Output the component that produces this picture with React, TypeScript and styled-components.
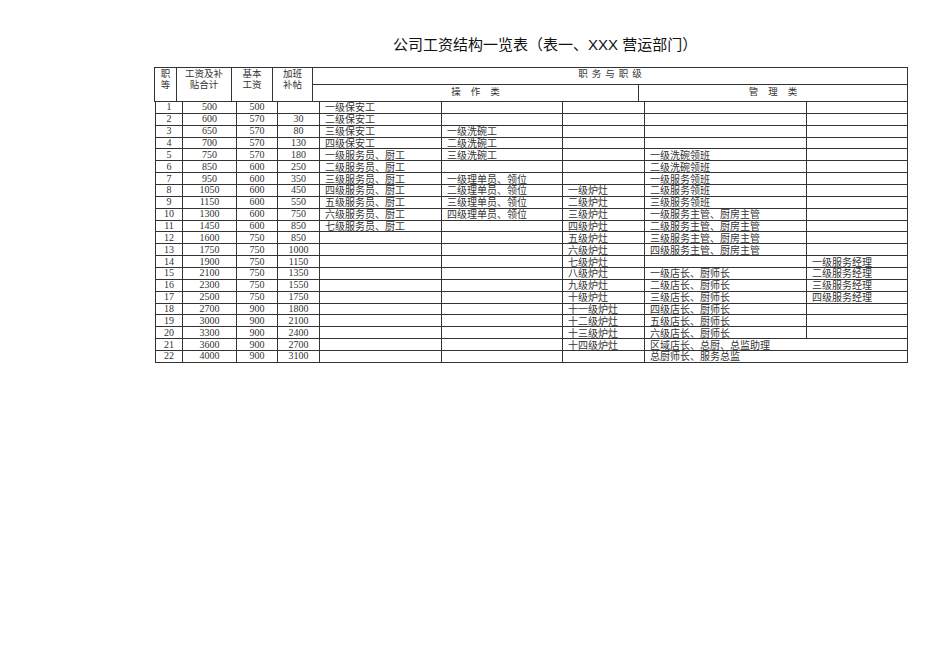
import React from "react";
import styled, { createGlobalStyle } from "styled-components";

const GlobalStyle = createGlobalStyle`
  html, body {
    margin: 0;
    padding: 0;
    background: #ffffff;
  }
  body {
    font-family: "Liberation Serif", "Noto Sans CJK SC", serif;
    color: #222;
  }
`;

const Page = styled.div`
  width: 950px;
  height: 672px;
  padding-top: 35px;
  box-sizing: border-box;
`;

const Title = styled.h1`
  margin: 0 0 12px 393px;
  font-family: "Liberation Sans", "Noto Sans CJK SC", sans-serif;
  font-weight: 400;
  font-size: 15px;
  line-height: 20px;
  color: #111;
  white-space: nowrap;
`;

const HeaderGrid = styled.div`
  margin-left: 154px;
  width: 754px;
  display: grid;
  grid-template-columns: 22px 55px 41px 40px 326px 269px;
  grid-template-rows: 17px 17px;
  border-left: 1px solid #333;
  border-top: 1px solid #333;
  box-sizing: border-box;
`;

const HeadCell = styled.div<{ $rows?: number; $span?: number; $spacing?: number; $pad?: number }>`
  grid-row: span ${(p) => p.$rows || 1};
  grid-column: span ${(p) => p.$span || 1};
  border-right: 1px solid #333;
  border-bottom: 1px solid #333;
  box-sizing: border-box;
  text-align: center;
  font-family: "Noto Sans CJK SC", sans-serif;
  font-size: 9.5px;
  line-height: 10.5px;
  padding-top: ${(p) => p.$pad || 0}px;
  padding-left: ${(p) => p.$spacing || 0}px;
  letter-spacing: ${(p) => p.$spacing || 0}px;
  color: #333;
  white-space: nowrap;
`;

const BodyGrid = styled.div`
  margin-left: 155px;
  width: 753px;
  display: grid;
  grid-template-columns: 27px 54px 41px 42px 122px 121px 82px 162px 101px;
  grid-auto-rows: 11.86px;
  border-left: 1px solid #333;
  box-sizing: border-box;
`;

const Cell = styled.div<{ $num?: boolean; $span?: number }>`
  grid-column: span ${(p) => p.$span || 1};
  border-right: 1px solid #333;
  border-bottom: 1px solid #333;
  box-sizing: border-box;
  display: flex;
  align-items: center;
  justify-content: ${(p) => (p.$num ? "center" : "flex-start")};
  padding-left: ${(p) => (p.$num ? 0 : 5)}px;
  font-size: 10px;
  line-height: 10px;
  font-family: ${(p) =>
    p.$num
      ? `"Liberation Serif", serif`
      : `"Noto Sans CJK SC", sans-serif`};
  color: #333;
  white-space: nowrap;
`;

type Row = {
  pay: number;
  base: number;
  extra: string;
  ops: [string, string, string];
  mgr: string;
  mgr2?: string;
  wide?: boolean;
};

const rows: Row[] = [
  { pay: 500, base: 500, extra: "", ops: ["一级保安工", "", ""], mgr: "" },
  { pay: 600, base: 570, extra: "30", ops: ["二级保安工", "", ""], mgr: "" },
  { pay: 650, base: 570, extra: "80", ops: ["三级保安工", "一级洗碗工", ""], mgr: "" },
  { pay: 700, base: 570, extra: "130", ops: ["四级保安工", "二级洗碗工", ""], mgr: "" },
  { pay: 750, base: 570, extra: "180", ops: ["一级服务员、厨工", "三级洗碗工", ""], mgr: "一级洗碗领班" },
  { pay: 850, base: 600, extra: "250", ops: ["二级服务员、厨工", "", ""], mgr: "二级洗碗领班" },
  { pay: 950, base: 600, extra: "350", ops: ["三级服务员、厨工", "一级理单员、领位", ""], mgr: "一级服务领班" },
  { pay: 1050, base: 600, extra: "450", ops: ["四级服务员、厨工", "二级理单员、领位", "一级炉灶"], mgr: "二级服务领班" },
  { pay: 1150, base: 600, extra: "550", ops: ["五级服务员、厨工", "三级理单员、领位", "二级炉灶"], mgr: "三级服务领班" },
  { pay: 1300, base: 600, extra: "750", ops: ["六级服务员、厨工", "四级理单员、领位", "三级炉灶"], mgr: "一级服务主管、厨房主管" },
  { pay: 1450, base: 600, extra: "850", ops: ["七级服务员、厨工", "", "四级炉灶"], mgr: "二级服务主管、厨房主管" },
  { pay: 1600, base: 750, extra: "850", ops: ["", "", "五级炉灶"], mgr: "三级服务主管、厨房主管" },
  { pay: 1750, base: 750, extra: "1000", ops: ["", "", "六级炉灶"], mgr: "四级服务主管、厨房主管" },
  { pay: 1900, base: 750, extra: "1150", ops: ["", "", "七级炉灶"], mgr: "", mgr2: "一级服务经理" },
  { pay: 2100, base: 750, extra: "1350", ops: ["", "", "八级炉灶"], mgr: "一级店长、厨师长", mgr2: "二级服务经理" },
  { pay: 2300, base: 750, extra: "1550", ops: ["", "", "九级炉灶"], mgr: "二级店长、厨师长", mgr2: "三级服务经理" },
  { pay: 2500, base: 750, extra: "1750", ops: ["", "", "十级炉灶"], mgr: "三级店长、厨师长", mgr2: "四级服务经理" },
  { pay: 2700, base: 900, extra: "1800", ops: ["", "", "十一级炉灶"], mgr: "四级店长、厨师长" },
  { pay: 3000, base: 900, extra: "2100", ops: ["", "", "十二级炉灶"], mgr: "五级店长、厨师长" },
  { pay: 3300, base: 900, extra: "2400", ops: ["", "", "十三级炉灶"], mgr: "六级店长、厨师长" },
  { pay: 3600, base: 900, extra: "2700", ops: ["", "", "十四级炉灶"], mgr: "区域店长、总厨、总监助理", wide: true },
  { pay: 4000, base: 900, extra: "3100", ops: ["", "", ""], mgr: "总厨师长、服务总监", wide: true },
];

export default function App() {
  return (
    <Page>
      <GlobalStyle />
      <Title>公司工资结构一览表（表一、XXX 营运部门）</Title>
      <HeaderGrid>
        <HeadCell $rows={2}>
          职<br />等
        </HeadCell>
        <HeadCell $rows={2}>
          工资及补<br />贴合计
        </HeadCell>
        <HeadCell $rows={2}>
          基本<br />工资
        </HeadCell>
        <HeadCell $rows={2}>
          加班<br />补帖
        </HeadCell>
        <HeadCell $span={2} $spacing={4}>
          职务与职级
        </HeadCell>
        <HeadCell $pad={1} $spacing={10}>
          操作类
        </HeadCell>
        <HeadCell $pad={1} $spacing={10}>
          管理类
        </HeadCell>
      </HeaderGrid>
      <BodyGrid>
        {rows.map((r, i) => (
          <React.Fragment key={i}>
            <Cell $num>{i + 1}</Cell>
            <Cell $num>{r.pay}</Cell>
            <Cell $num>{r.base}</Cell>
            <Cell $num>{r.extra}</Cell>
            {r.ops.map((o, j) => (
              <Cell key={j}>{o}</Cell>
            ))}
            {r.wide ? (
              <Cell $span={2}>{r.mgr}</Cell>
            ) : (
              <>
                <Cell>{r.mgr}</Cell>
                <Cell>{r.mgr2 || ""}</Cell>
              </>
            )}
          </React.Fragment>
        ))}
      </BodyGrid>
    </Page>
  );
}
